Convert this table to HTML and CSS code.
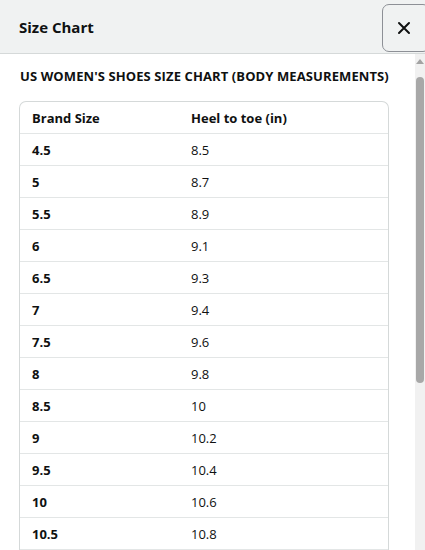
FILE: index.html
```html
<!DOCTYPE html>
<html lang="en">
  <head>
    <meta charset="UTF-8" />
    <meta name="viewport" content="width=device-width, initial-scale=1.0" />
    <title>Size Chart</title>
    <link rel="stylesheet" href="styles.css">
  </head>
  <body>
    <!-- popover header -->
    <div class="header">
      <h1 class="header-title">Size Chart</h1>
      <button class="close-btn" aria-label="Close">
        <svg width="14" height="14" viewBox="0 0 14 14">
          <path d="M2 2 L12 12 M12 2 L2 12" stroke="#0f1111" stroke-width="2" stroke-linecap="round" />
        </svg>
      </button>
    </div>

    <!-- popover body -->
    <div class="body">
      <div class="content">
        <h2 class="chart-title">US WOMEN'S SHOES SIZE CHART (BODY MEASUREMENTS)</h2>
        <div class="table">
          <div class="row row-head">
            <div class="cell size">Brand Size</div>
            <div class="cell">Heel to toe (in)</div>
          </div>
          <div class="row"><div class="cell size">4.5</div><div class="cell">8.5</div></div>
          <div class="row"><div class="cell size">5</div><div class="cell">8.7</div></div>
          <div class="row"><div class="cell size">5.5</div><div class="cell">8.9</div></div>
          <div class="row"><div class="cell size">6</div><div class="cell">9.1</div></div>
          <div class="row"><div class="cell size">6.5</div><div class="cell">9.3</div></div>
          <div class="row"><div class="cell size">7</div><div class="cell">9.4</div></div>
          <div class="row"><div class="cell size">7.5</div><div class="cell">9.6</div></div>
          <div class="row"><div class="cell size">8</div><div class="cell">9.8</div></div>
          <div class="row"><div class="cell size">8.5</div><div class="cell">10</div></div>
          <div class="row"><div class="cell size">9</div><div class="cell">10.2</div></div>
          <div class="row"><div class="cell size">9.5</div><div class="cell">10.4</div></div>
          <div class="row"><div class="cell size">10</div><div class="cell">10.6</div></div>
          <div class="row"><div class="cell size">10.5</div><div class="cell">10.8</div></div>
        </div>
      </div>

      <!-- scrollbar -->
      <div class="scrollbar">
        <div class="scroll-arrow"></div>
        <div class="scroll-thumb"></div>
      </div>
    </div>
  </body>
</html>
```

FILE: styles.css
```css
html,
body {
  margin: 0;
  height: 100%;
  overflow: hidden;
}

body {
  font-family: "Open Sans", "Noto Sans", Arial, sans-serif;
  color: #0f1111;
  background-color: white;
  display: flex;
  flex-direction: column;
}

.header {
  height: 53px;
  flex: none;
  display: flex;
  align-items: center;
  justify-content: space-between;
  background-color: #f0f2f2;
  border-bottom: 1px solid #d5d9d9;
  padding-left: 19px;
  overflow: hidden;
}

.header-title {
  margin: 0;
  font-size: 15px;
  font-weight: 700;
}

.close-btn {
  width: 48px;
  height: 48px;
  margin-right: -5px;
  margin-top: 3px;
  display: flex;
  align-items: center;
  justify-content: center;
  padding: 0 5px 0 0;
  border: 1px solid #8d9096;
  border-radius: 7px;
  background-color: #f0f2f2;
  cursor: pointer;
}

.body {
  flex: 1;
  display: flex;
  min-height: 0;
}

.content {
  flex: 1;
  padding: 12px 26px 0 19px;
}

.chart-title {
  margin: 0 0 15px 1px;
  font-size: 13px;
  font-weight: 700;
  line-height: 20px;
  letter-spacing: 0.1px;
}

.table {
  border: 1px solid #d5d9d9;
  border-bottom: none;
  border-radius: 7px 7px 0 0;
  overflow: hidden;
}

.row {
  display: flex;
  height: 31px;
  align-items: center;
  border-top: 1px solid #e3e6e6;
  font-size: 13px;
}

.row:last-child {
  border-bottom: 1px solid #e3e6e6;
}

.row-head {
  border-top: none;
  font-weight: 700;
}

.cell {
  flex: 1;
  padding-left: 12px;
}

.size {
  flex: none;
  width: 147px;
  font-weight: 700;
}

.scrollbar {
  width: 10px;
  flex: none;
  background-color: #f1f1f1;
  display: flex;
  flex-direction: column;
  align-items: center;
}

.scroll-arrow {
  margin-top: 5px;
  width: 0;
  height: 0;
  border-left: 4px solid transparent;
  border-right: 4px solid transparent;
  border-bottom: 5px solid #a3a3a3;
}

.scroll-thumb {
  margin-top: 13px;
  width: 8px;
  height: 306px;
  border-radius: 4px;
  background-color: #a8a8a8;
}
```
